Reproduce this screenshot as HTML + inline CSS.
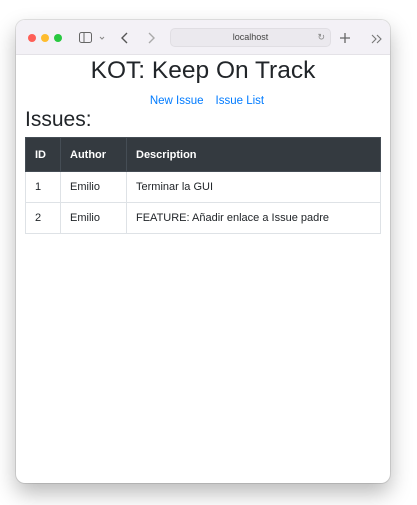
<!DOCTYPE html>
<html><head><style>
*{margin:0;padding:0;box-sizing:border-box}
body{width:417px;height:505px;background:#fff;position:relative;font-family:"Liberation Sans",sans-serif;overflow:hidden}
.win{position:absolute;left:16px;top:20px;width:374px;height:463px;background:#fff;border-radius:9px;box-shadow:0 10px 22px rgba(0,0,0,.28),0 0 0 1px rgba(0,0,0,.1);overflow:hidden}
.bar{position:absolute;left:0;top:0;width:374px;height:35px;background:#f3f1f6;border-bottom:1px solid #e4e2e7}
.dot{position:absolute;top:14px;width:8px;height:8px;border-radius:50%}
.url{position:absolute;left:154px;top:8px;width:161px;height:19px;background:#ebe9ee;border-radius:5px;border:1px solid #e0dee3;font-size:9px;color:#444;text-align:center;line-height:17px}
h1{position:absolute;left:0;width:374px;top:37px;text-align:center;font-weight:400;font-size:24.5px;color:#212529}
.nav{position:absolute;top:75px;left:4px;width:374px;text-align:center;font-size:11.5px;color:#007bff}
.nav span{margin:0 6px}
h2{position:absolute;left:9px;top:88px;font-weight:400;font-size:21px;color:#212529}
table{position:absolute;left:9px;top:117px;width:356px;border-collapse:collapse;font-size:11px;color:#212529}
th{background:#343a40;color:#fff;text-align:left;height:34px;padding:0 9px;border:1px solid #454d55;font-weight:700}
td{height:31px;padding:0 9px;border:1px solid #dee2e6}
</style></head><body>
<div class="win">
<div class="bar">
<div class="dot" style="left:12px;background:#fe5f57"></div>
<div class="dot" style="left:25px;background:#febc2e"></div>
<div class="dot" style="left:38px;background:#28c840"></div>
<svg style="position:absolute;left:63px;top:12px" width="30" height="12"><rect x="0.5" y="0.5" width="12" height="10" rx="2" fill="none" stroke="#666"/><line x1="5" y1="1" x2="5" y2="10" stroke="#666"/><path d="M21 5l2 2 2-2" fill="none" stroke="#888"/></svg>
<svg style="position:absolute;left:104px;top:11px" width="40" height="14"><path d="M7 2L2 7l5 5" fill="none" stroke="#555" stroke-width="1.4"/><path d="M29 2l5 5-5 5" fill="none" stroke="#aaa" stroke-width="1.4"/></svg>
<div class="url">localhost<span style="position:absolute;right:5px;color:#888">↻</span></div>
<svg style="position:absolute;left:323px;top:12px" width="12" height="12"><path d="M6 1v10M1 6h10" stroke="#666" stroke-width="1.3"/></svg>
<svg style="position:absolute;left:355px;top:14px" width="12" height="10"><path d="M1 1l4 4-4 4M6 1l4 4-4 4" fill="none" stroke="#777" stroke-width="1.1"/></svg>
</div>
<h1>KOT: Keep On Track</h1>
<div class="nav"><span>New Issue</span><span>Issue List</span></div>
<h2>Issues:</h2>
<table>
<tr><th style="width:35px">ID</th><th style="width:66px">Author</th><th>Description</th></tr>
<tr><td>1</td><td>Emilio</td><td>Terminar la GUI</td></tr>
<tr><td>2</td><td>Emilio</td><td>FEATURE: Añadir enlace a Issue padre</td></tr>
</table>
</div>
</body></html>
